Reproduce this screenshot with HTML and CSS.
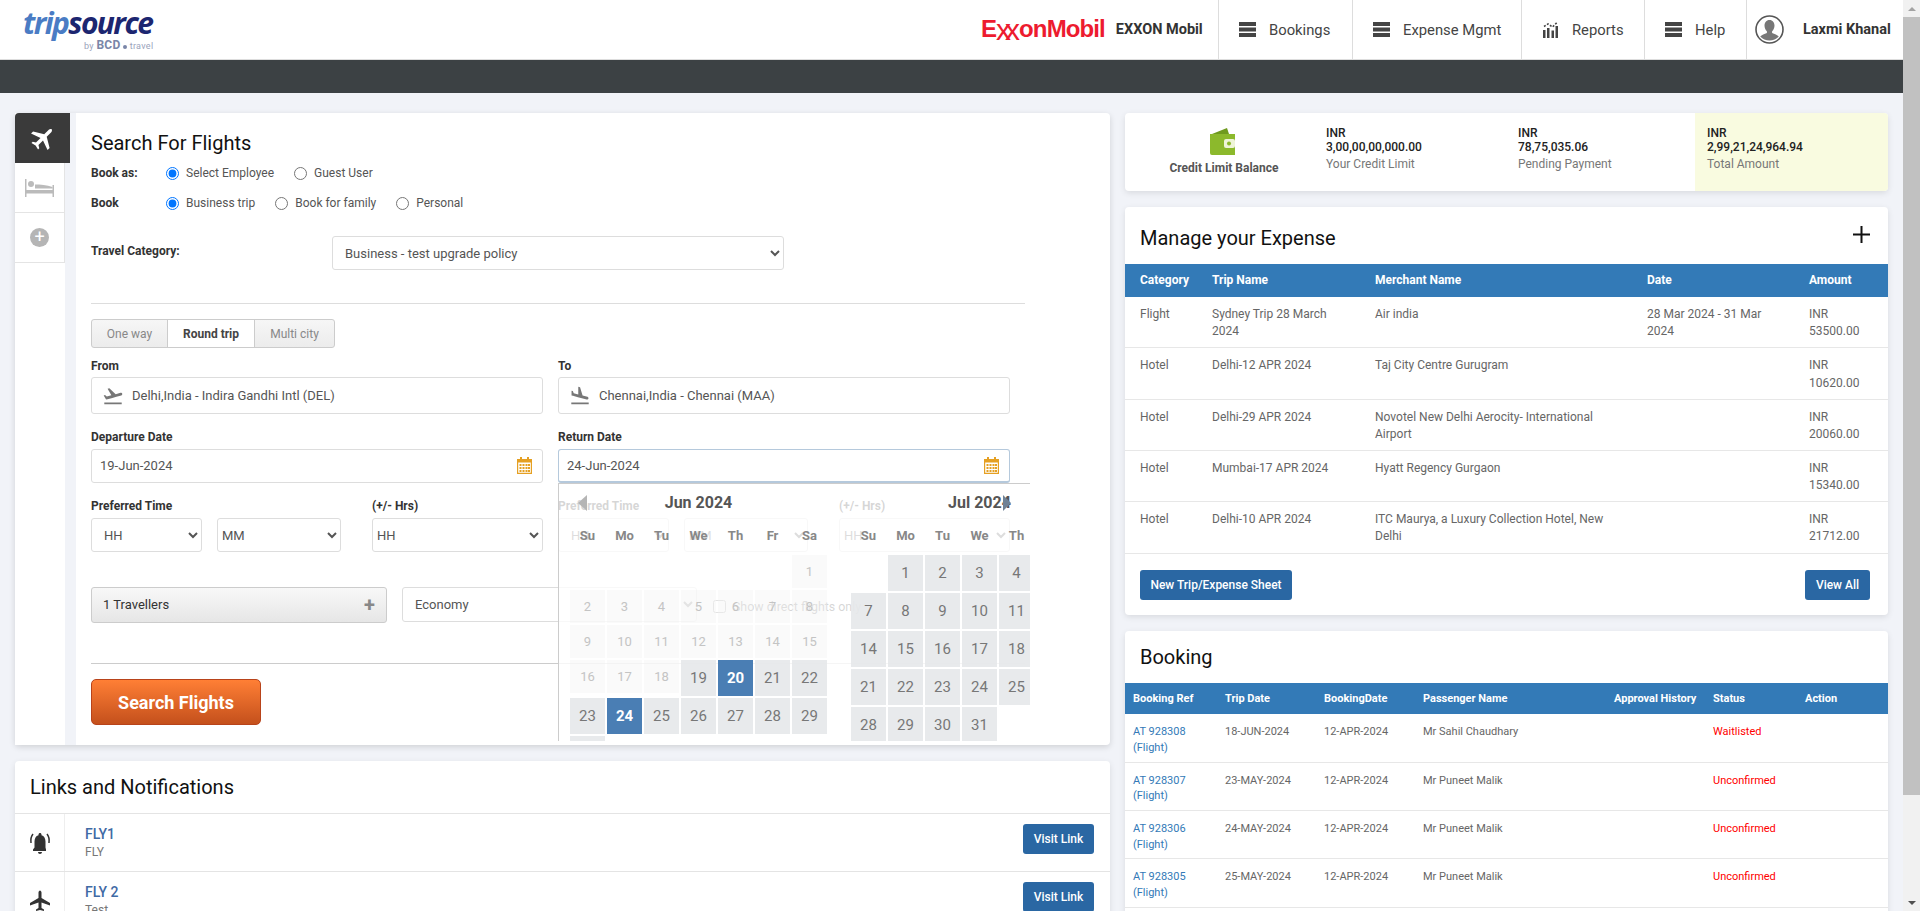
FILE: index.html
```html
<!DOCTYPE html>
<html lang="en">
<head>
    <meta charset="UTF-8">
    <meta name="viewport" content="width=device-width, initial-scale=1.0">
    <title>TripSource - Search For Flights</title>
    <link rel="stylesheet" href="styles.css">
</head>
<body>
    <svg class="icon-defs" width="0" height="0">
        <symbol id="i-menu" viewBox="0 0 17 15"><path d="M0 0h17v4H0zM0 5.500h17v4H0zM0 11h17v4H0z"/></symbol>
        <symbol id="i-plane" viewBox="0 0 24 24"><path d="M22 16.500v-2.500l-8.500-5V3.500c0-1-.8-2-1.500-2s-1.500 1-1.500 2V9L2 14v2.500l8.500-3V19L8 20.500V22l4-1 4 1v-1.500L13.500 19v-5.500z"/></symbol>
        <symbol id="i-cal" viewBox="0 0 15 17">
            <path d="M3 0h2v2h5V0h2v2h3v15H0V2h3zM1.200 5.500v10.300h12.600V5.500z"/>
            <path d="M2.500 7h2v2h-2zM5.500 7h2v2h-2zM8.500 7h2v2h-2zM11 7h2v2h-2zM2.500 10h2v2h-2zM5.500 10h2v2h-2zM8.500 10h2v2h-2zM11 10h2v2h-2zM2.500 13h2v2h-2zM5.500 13h2v2h-2zM8.500 13h2v2h-2zM11 13h2v2h-2z"/>
        </symbol>
    </svg>

    <div class="page">
        <div class="content">
            <header class="topbar">
                <div class="logo">
                    <div class="logo-word"><span class="logo-trip">trip</span><span class="logo-source">source</span></div>
                    <div class="logo-by">by <b>BCD</b> <i class="logo-dot"></i> travel</div>
                </div>
                <div class="topnav">
                    <div class="brand">
                        <span class="brand-logo">E<span class="brand-xx">xx</span>onMobil</span>
                        <span class="brand-name">EXXON Mobil</span>
                    </div>
                    <a class="nav-item nav-bookings"><svg class="nav-icon"><use href="#i-menu"/></svg>Bookings</a>
                    <a class="nav-item nav-expense"><svg class="nav-icon"><use href="#i-menu"/></svg>Expense Mgmt</a>
                    <a class="nav-item nav-reports">
                        <svg class="nav-icon reports-icon" viewBox="0 0 17 17"><path d="M1 9h2.500v8H1zM5 7h2.500v10H5zM9.500 9.500H12V17H9.500zM13.500 5H16v12h-2.500z"/><path d="M2 5.500l4-2.500 4.500 3L15 1.500" fill="none" stroke="currentColor" stroke-width="1.600" stroke-dasharray="2 1.500"/></svg>
                        Reports
                    </a>
                    <a class="nav-item nav-help"><svg class="nav-icon"><use href="#i-menu"/></svg>Help</a>
                    <div class="nav-user">
                        <svg class="avatar" viewBox="0 0 29 29">
                            <circle cx="14.500" cy="14.500" r="13.500" fill="#fff" stroke="#555" stroke-width="1.600"/>
                            <path d="M14.500 5c3.200 0 5 2.500 5 5.600 0 2.400-1 4.500-2.400 5.700v1.700c2.500 1 5.300 1.900 6.700 3.500a13 13 0 0 1-18.600 0c1.400-1.600 4.200-2.500 6.700-3.500v-1.700c-1.400-1.200-2.400-3.300-2.400-5.700 0-3.100 1.800-5.600 5-5.600z" fill="#777"/>
                        </svg>
                        <span>Laxmi Khanal</span>
                    </div>
                </div>
            </header>
            <div class="darkbar"></div>

            <main class="layout">
                <div class="col-left">
                    <section class="search-card">
                        <nav class="side-tabs">
                            <div class="side-tab active"><svg class="side-plane"><use href="#i-plane"/></svg></div>
                            <div class="side-tab">
                                <svg class="side-bed" viewBox="0 0 29 18"><path d="M0 0h1.500v11h26V6h1.500v12h-1.500v-3.500h-26V18H0z"/><circle cx="6" cy="5" r="3"/><path d="M10 5.500c5 0 12 .5 17.500 2.500v1.500H10z"/></svg>
                            </div>
                            <div class="side-tab"><span class="side-plus">+</span></div>
                        </nav>

                        <form class="search-form">
                            <h2 class="form-title">Search For Flights</h2>
                            <div class="radio-row">
                                <span class="radio-label">Book as:</span>
                                <label class="radio"><input type="radio" name="bookas" checked>Select Employee</label>
                                <label class="radio"><input type="radio" name="bookas">Guest User</label>
                            </div>
                            <div class="radio-row">
                                <span class="radio-label">Book</span>
                                <label class="radio"><input type="radio" name="book" checked>Business trip</label>
                                <label class="radio"><input type="radio" name="book">Book for family</label>
                                <label class="radio"><input type="radio" name="book">Personal</label>
                            </div>
                            <div class="category-row">
                                <label class="category-label">Travel Category:</label>
                                <select class="field category-select"><option>Business - test upgrade policy</option></select>
                            </div>
                            <hr class="rule rule-top">

                            <div class="trip-tabs">
                                <span class="trip-tab oneway">One way</span>
                                <span class="trip-tab round selected">Round trip</span>
                                <span class="trip-tab multi">Multi city</span>
                            </div>

                            <div class="two-col">
                                <div>
                                    <label class="label">From</label>
                                    <div class="field place">
                                        <svg class="place-icon" viewBox="0 0 24 24"><path d="M2.500 19h19v2h-19zm19.570-9.360c-.21-.8-1.040-1.280-1.840-1.060L14.920 10l-6.900-6.430-1.930.51 4.140 7.170-4.970 1.330-1.970-1.540-1.450.39 1.820 3.160.77 1.330 1.600-.43 5.310-1.420 4.350-1.160L21 11.490c.81-.23 1.280-1.050 1.070-1.850z"/></svg>
                                        Delhi,India - Indira Gandhi Intl (DEL)
                                    </div>
                                </div>
                                <div>
                                    <label class="label">To</label>
                                    <div class="field place">
                                        <svg class="place-icon" viewBox="0 0 24 24"><path d="M2.500 19h19v2h-19zm7.180-5.730l4.350 1.160 5.310 1.420c.8.21 1.620-.26 1.840-1.060.21-.8-.26-1.620-1.060-1.840l-5.310-1.420-2.760-9.020L10.120 2v8.280L5.150 8.950l-.93-2.320-1.450-.39v5.170l1.600.43 5.310 1.430z"/></svg>
                                        Chennai,India - Chennai (MAA)
                                    </div>
                                </div>
                            </div>

                            <div class="two-col date-row">
                                <div>
                                    <label class="label">Departure Date</label>
                                    <div class="field date">19-Jun-2024<svg class="cal-icon"><use href="#i-cal"/></svg></div>
                                </div>
                                <div class="return-date">
                                    <label class="label">Return Date</label>
                                    <div class="field date focused">24-Jun-2024<svg class="cal-icon"><use href="#i-cal"/></svg></div>

                                    <div class="calendar">
                                        <span class="cal-prev"></span>
                                        <span class="cal-next"></span>
                                        <div class="cal-month">
                                            <div class="cal-title">Jun 2024</div>
                                            <div class="cal-days"><span>Su</span><span>Mo</span><span>Tu</span><span>We</span><span>Th</span><span>Fr</span><span>Sa</span></div>
                                            <div class="cal-grid">
                                                <span></span><span></span><span></span><span></span><span></span><span></span><span class="off">1</span>
                                                <span class="off">2</span><span class="off">3</span><span class="off">4</span><span class="off">5</span><span class="off">6</span><span class="off">7</span><span class="off">8</span>
                                                <span class="off">9</span><span class="off">10</span><span class="off">11</span><span class="off">12</span><span class="off">13</span><span class="off">14</span><span class="off">15</span>
                                                <span class="off">16</span><span class="off">17</span><span class="off">18</span><span class="day">19</span><span class="day picked">20</span><span class="day">21</span><span class="day">22</span>
                                                <span class="day">23</span><span class="day picked">24</span><span class="day">25</span><span class="day">26</span><span class="day">27</span><span class="day">28</span><span class="day">29</span>
                                                <span class="day">30</span>
                                            </div>
                                        </div>
                                        <div class="cal-month">
                                            <div class="cal-title">Jul 2024</div>
                                            <div class="cal-days"><span>Su</span><span>Mo</span><span>Tu</span><span>We</span><span>Th</span><span>Fr</span><span>Sa</span></div>
                                            <div class="cal-grid">
                                                <span></span><span class="day">1</span><span class="day">2</span><span class="day">3</span><span class="day">4</span><span class="day">5</span><span class="day">6</span>
                                                <span class="day">7</span><span class="day">8</span><span class="day">9</span><span class="day">10</span><span class="day">11</span><span class="day">12</span><span class="day">13</span>
                                                <span class="day">14</span><span class="day">15</span><span class="day">16</span><span class="day">17</span><span class="day">18</span><span class="day">19</span><span class="day">20</span>
                                                <span class="day">21</span><span class="day">22</span><span class="day">23</span><span class="day">24</span><span class="day">25</span><span class="day">26</span><span class="day">27</span>
                                                <span class="day">28</span><span class="day">29</span><span class="day">30</span><span class="day">31</span>
                                            </div>
                                        </div>
                                    </div>
                                </div>
                            </div>

                            <div class="two-col time-row">
                                <div class="time-group">
                                    <div class="time-pref">
                                        <label class="label">Preferred Time</label>
                                        <div class="time-selects">
                                            <select class="field sel-hh"><option>HH</option></select>
                                            <select class="field sel-mm"><option>MM</option></select>
                                        </div>
                                    </div>
                                    <div class="time-plus">
                                        <label class="label">(+/- Hrs)</label>
                                        <select class="field sel-plus"><option>HH</option></select>
                                    </div>
                                </div>
                                <div class="time-group">
                                    <div class="time-pref">
                                        <label class="label">Preferred Time</label>
                                        <div class="time-selects">
                                            <select class="field sel-hh"><option>HH</option></select>
                                            <select class="field sel-mm"><option>MM</option></select>
                                        </div>
                                    </div>
                                    <div class="time-plus">
                                        <label class="label">(+/- Hrs)</label>
                                        <select class="field sel-plus"><option>HH</option></select>
                                    </div>
                                </div>
                            </div>

                            <div class="traveller-row">
                                <div class="travellers">1 Travellers<span class="trav-plus">+</span></div>
                                <select class="field cabin"><option>Economy</option></select>
                                <label class="direct"><input type="checkbox">Show direct flights only</label>
                            </div>
                            <hr class="rule rule-bottom">
                            <button type="button" class="search-btn">Search Flights</button>
                        </form>
                    </section>

                    <section class="links-card">
                        <h2 class="links-title">Links and Notifications</h2>
                        <div class="link-row">
                            <div class="link-icon">
                                <svg class="bell" viewBox="0 0 24 24"><path d="M12 23c1.100 0 2-.9 2-2h-4c0 1.100.89 2 2 2zm5.500-6.500v-6c0-3.070-1.300-5.640-4-6.320V3.500c0-.83-.67-1.500-1.500-1.500s-1.500.67-1.500 1.500v.68c-2.700.68-4 3.240-4 6.320v6l-1.500 2V20h13v-1.500z"/><path d="M5 3C3.300 5 2.500 8 3 12M19 3c1.700 2 2.500 5 2 9" fill="none" stroke="currentColor" stroke-width="1.500"/></svg>
                            </div>
                            <div class="link-text"><a class="link-name">FLY1</a><span class="link-sub">FLY</span></div>
                            <a class="btn visit-btn">Visit Link</a>
                        </div>
                        <div class="link-row">
                            <div class="link-icon"><svg class="link-plane"><use href="#i-plane"/></svg></div>
                            <div class="link-text"><a class="link-name">FLY 2</a><span class="link-sub">Test</span></div>
                            <a class="btn visit-btn">Visit Link</a>
                        </div>
                    </section>
                </div>

                <div class="col-right">
                    <section class="card credit-card">
                        <div class="credit-main">
                            <svg class="wallet" viewBox="0 0 27 27">
                                <path d="M3 6L18 0l2 6z" fill="#6f9a1e"/>
                                <path d="M1 6h25v21H3a2 2 0 0 1-2-2z" fill="#8cb92c"/>
                                <rect x="15" y="11" width="11" height="9" rx="2" fill="#eef4d8"/>
                                <circle cx="20" cy="15.500" r="2" fill="#8cb92c"/>
                            </svg>
                            <span>Credit Limit Balance</span>
                        </div>
                        <div class="credit-col">
                            <b>INR</b><b>3,00,00,00,000.00</b><span>Your Credit Limit</span>
                        </div>
                        <div class="credit-col">
                            <b>INR</b><b>78,75,035.06</b><span>Pending Payment</span>
                        </div>
                        <div class="credit-col total">
                            <b>INR</b><b>2,99,21,24,964.94</b><span>Total Amount</span>
                        </div>
                    </section>

                    <section class="card expense-card">
                        <div class="expense-head">
                            <h2 class="card-title">Manage your Expense</h2>
                            <svg class="add-icon" viewBox="0 0 17 17"><path d="M7.500 0h2v7.500H17v2H9.500V17h-2V9.500H0v-2h7.500z"/></svg>
                        </div>
                        <table class="data-table expense-table">
                            <colgroup><col class="e1"><col class="e2"><col class="e3"><col class="e4"><col class="e5"></colgroup>
                            <thead>
                                <tr><th>Category</th><th>Trip Name</th><th>Merchant Name</th><th>Date</th><th>Amount</th></tr>
                            </thead>
                            <tbody>
                                <tr><td>Flight</td><td>Sydney Trip 28 March 2024</td><td>Air india</td><td>28 Mar 2024 - 31 Mar 2024</td><td>INR 53500.00</td></tr>
                                <tr><td>Hotel</td><td>Delhi-12 APR 2024</td><td>Taj City Centre Gurugram</td><td></td><td>INR 10620.00</td></tr>
                                <tr><td>Hotel</td><td>Delhi-29 APR 2024</td><td>Novotel New Delhi Aerocity- International Airport</td><td></td><td>INR 20060.00</td></tr>
                                <tr><td>Hotel</td><td>Mumbai-17 APR 2024</td><td>Hyatt Regency Gurgaon</td><td></td><td>INR 15340.00</td></tr>
                                <tr><td>Hotel</td><td>Delhi-10 APR 2024</td><td>ITC Maurya, a Luxury Collection Hotel, New Delhi</td><td></td><td>INR 21712.00</td></tr>
                            </tbody>
                        </table>
                        <div class="expense-foot">
                            <a class="btn new-btn">New Trip/Expense Sheet</a>
                            <a class="btn all-btn">View All</a>
                        </div>
                    </section>

                    <section class="card booking-card">
                        <h2 class="card-title booking-title">Booking</h2>
                        <table class="data-table booking-table">
                            <colgroup><col class="b1"><col class="b2"><col class="b3"><col class="b4"><col class="b5"><col class="b6"><col class="b7"></colgroup>
                            <thead>
                                <tr><th>Booking Ref</th><th>Trip Date</th><th>BookingDate</th><th>Passenger Name</th><th>Approval History</th><th>Status</th><th>Action</th></tr>
                            </thead>
                            <tbody>
                                <tr><td><a class="ref">AT 928308 (Flight)</a></td><td>18-JUN-2024</td><td>12-APR-2024</td><td>Mr Sahil Chaudhary</td><td></td><td class="status">Waitlisted</td><td></td></tr>
                                <tr><td><a class="ref">AT 928307 (Flight)</a></td><td>23-MAY-2024</td><td>12-APR-2024</td><td>Mr Puneet Malik</td><td></td><td class="status">Unconfirmed</td><td></td></tr>
                                <tr><td><a class="ref">AT 928306 (Flight)</a></td><td>24-MAY-2024</td><td>12-APR-2024</td><td>Mr Puneet Malik</td><td></td><td class="status">Unconfirmed</td><td></td></tr>
                                <tr><td><a class="ref">AT 928305 (Flight)</a></td><td>25-MAY-2024</td><td>12-APR-2024</td><td>Mr Puneet Malik</td><td></td><td class="status">Unconfirmed</td><td></td></tr>
                            </tbody>
                        </table>
                    </section>
                </div>
            </main>
        </div>

        <div class="scrollbar">
            <span class="sb-arrow sb-up"></span>
            <div class="sb-track"><div class="sb-thumb"></div></div>
            <span class="sb-arrow sb-down"></span>
        </div>
    </div>
</body>
</html>
```

FILE: styles.css
```css
* {
    box-sizing: border-box;
}
html, body {
    margin: 0;
    height: 100%;
    overflow: hidden;
}
body {
    font-family: Roboto, "Liberation Sans", sans-serif;
    font-size: 12px;
    color: #555;
    background: #f1f3f8;
}
.icon-defs {
    position: absolute;
}
.page {
    display: flex;
    height: 911px;
    overflow: hidden;
}
.content {
    flex: 1;
    min-width: 0;
}

/* scrollbar */
.scrollbar {
    width: 17px;
    background: #f1f1f1;
    display: flex;
    flex-direction: column;
}
.sb-arrow {
    height: 17px;
    display: flex;
    align-items: center;
    justify-content: center;
}
.sb-up::before,
.sb-down::before {
    content: "";
    border-left: 4px solid transparent;
    border-right: 4px solid transparent;
}
.sb-up::before {
    border-bottom: 4px solid #a3a3a3;
}
.sb-down::before {
    border-top: 4px solid #505050;
}
.sb-track {
    flex: 1;
}
.sb-thumb {
    height: 778px;
    background: #c1c1c1;
}

/* header */
.topbar {
    height: 60px;
    background: #fff;
    border-bottom: 1px solid #ddd;
    display: flex;
    justify-content: space-between;
}
.logo {
    padding: 8px 0 0 23px;
    width: 170px;
}
.logo-word {
    font-family: "Open Sans", sans-serif;
    font-size: 30px;
    font-weight: 700;
    font-style: italic;
    line-height: 30px;
    letter-spacing: -1.600px;
}
.logo-trip {
    color: #4a7cc4;
}
.logo-source {
    color: #1c2670;
}
.logo-by {
    margin: 2px 0 0 61px;
    font-size: 9px;
    line-height: 10px;
    letter-spacing: 0.300px;
    color: #9aa3bb;
    white-space: nowrap;
}
.logo-by b {
    font-size: 12px;
    color: #7a86a8;
}
.logo-dot {
    display: inline-block;
    width: 4px;
    height: 4px;
    border-radius: 50%;
    background: #7a86a8;
}
.topnav {
    display: flex;
    align-items: stretch;
}
.brand {
    display: flex;
    align-items: center;
    gap: 11px;
    width: 237px;
    white-space: nowrap;
}
.brand-logo {
    font-family: "Liberation Sans", sans-serif;
    font-size: 24px;
    font-weight: 700;
    letter-spacing: -0.900px;
    color: #ed1b2f;
}
.brand-xx {
    font-size: 30px;
    font-weight: 400;
    letter-spacing: -6px;
    vertical-align: -3px;
    line-height: 1;
    margin-right: 5px;
}
.brand-name {
    font-size: 14.500px;
    font-weight: 700;
    color: #333;
}
.nav-item {
    flex: none;
    display: flex;
    align-items: center;
    gap: 13px;
    padding-left: 20px;
    border-left: 1px solid #ddd;
    font-size: 14.800px;
    color: #444;
    white-space: nowrap;
}
.nav-bookings {
    width: 134px;
}
.nav-expense {
    width: 169px;
}
.nav-reports {
    width: 123px;
}
.nav-help {
    width: 102px;
}
.nav-icon {
    width: 17px;
    height: 15px;
    fill: #444;
    color: #444;
    flex: none;
}
.reports-icon {
    height: 17px;
}
.nav-user {
    display: flex;
    align-items: center;
    gap: 19px;
    padding-left: 8px;
    border-left: 1px solid #ddd;
    font-size: 14.500px;
    font-weight: 700;
    color: #333;
    width: 157px;
    white-space: nowrap;
}
.avatar {
    width: 29px;
    height: 29px;
    flex: none;
}
.darkbar {
    height: 33px;
    background: #3c4144;
}

/* page columns */
.layout {
    display: grid;
    grid-template-columns: 1095px 763px;
    gap: 15px;
    padding: 20px 15px 0;
    align-items: start;
}
.card,
.links-card {
    background: #fff;
    border-radius: 4px;
    box-shadow: 0 2px 6px rgba(0, 0, 0, 0.1);
}

/* search card */
.search-card {
    display: flex;
    height: 632px;
    background: #fff;
    border-radius: 4px;
    box-shadow: 0 2px 6px rgba(0, 0, 0, 0.14);
    margin-bottom: 16px;
}
.side-tabs {
    width: 61px;
    flex: none;
    background: linear-gradient(to right, #fff 50px, #f1f3f8 50px);
}
.side-tab {
    width: 50px;
    height: 50px;
    border-right: 1px solid #e4e4e4;
    border-bottom: 1px solid #e4e4e4;
    display: flex;
    align-items: center;
    justify-content: center;
}
.side-tab.active {
    width: 55px;
    background: #3a3a3a;
    border: none;
    border-radius: 4px 0 0 0;
}
.side-plane {
    width: 28px;
    height: 28px;
    fill: #fff;
    transform: rotate(45deg);
}
.side-bed {
    width: 29px;
    height: 18px;
    fill: #bbb;
}
.side-plus {
    width: 19px;
    height: 19px;
    border-radius: 50%;
    background: #b5b5b5;
    color: #fff;
    font-size: 18px;
    line-height: 18px;
    text-align: center;
}
.search-form {
    flex: 1;
    margin: 0;
    padding: 15px 85px 20px 15px;
    min-width: 0;
}
.form-title {
    margin: 0;
    font-size: 20px;
    font-weight: 400;
    line-height: 30px;
    color: #111;
}
.radio-row {
    display: flex;
    align-items: center;
    height: 30px;
}
.radio-label {
    width: 75px;
    font-weight: 700;
    color: #333;
}
.radio {
    display: flex;
    align-items: center;
    gap: 7px;
    margin-right: 20px;
    color: #555;
}
.radio input {
    margin: 0;
    width: 13px;
    height: 13px;
}
.category-row {
    display: flex;
    margin-top: 18px;
}
.category-label {
    width: 241px;
    padding-top: 8px;
    font-weight: 700;
    color: #333;
}
.field {
    background: #fff;
    border: 1px solid #ddd;
    border-radius: 3px;
    font-family: inherit;
    font-size: 13px;
    color: #555;
}
.category-select {
    width: 452px;
    height: 34px;
    padding: 0 8px;
}
.rule {
    border: none;
    border-top: 1px solid #ddd;
    margin: 0;
}
.rule-top {
    margin: 33px 0 15px;
}
.rule-bottom {
    margin: 40px 0 15px;
    border-top-color: #ccc;
}
.trip-tabs {
    display: inline-flex;
    height: 29px;
    border: 1px solid #ccc;
    border-radius: 3px;
    vertical-align: top;
    background: linear-gradient(#f6f6f6, #ececec);
}
.trip-tab {
    display: flex;
    align-items: center;
    justify-content: center;
    color: #888;
}
.oneway {
    width: 75px;
}
.round {
    width: 88px;
}
.multi {
    width: 79px;
}
.trip-tab.selected {
    background: #fff;
    font-weight: 700;
    color: #444;
    border-left: 1px solid #ccc;
    border-right: 1px solid #ccc;
}
.two-col {
    display: grid;
    grid-template-columns: 452px 452px;
    gap: 15px;
    margin-top: 9px;
}
.label {
    display: block;
    height: 18px;
    line-height: 18px;
    font-weight: 700;
    color: #333;
    margin-bottom: 2px;
}
.place {
    height: 37px;
    display: flex;
    align-items: center;
    padding-left: 10px;
}
.place-icon {
    width: 22px;
    height: 22px;
    fill: #777;
    margin-right: 8px;
    flex: none;
}
.date-row {
    margin-top: 14px;
}
.date-row .label,
.time-row .label {
    margin-bottom: 3px;
}
.date {
    position: relative;
    height: 34px;
    line-height: 32px;
    padding-left: 8px;
}
.date.focused {
    border-color: #b5c9dc;
    border-bottom-width: 2px;
}
.cal-icon {
    position: absolute;
    right: 10px;
    top: 7px;
    width: 15px;
    height: 17px;
    fill: #e5a023;
}
.time-row {
    margin-top: 14px;
}
.time-group {
    display: flex;
    justify-content: space-between;
}
.time-selects {
    display: flex;
    gap: 15px;
}
.time-row select {
    height: 34px;
}
.sel-hh {
    width: 111px;
    padding-left: 8px;
}
.sel-mm {
    width: 124px;
    padding-left: 0;
}
.sel-plus {
    width: 171px;
    padding-left: 0;
}

.traveller-row {
    display: flex;
    align-items: flex-start;
    margin-top: 35px;
    height: 36px;
}
.travellers {
    width: 296px;
    height: 36px;
    line-height: 34px;
    padding: 0 11px;
    border: 1px solid #ccc;
    border-radius: 3px;
    background: linear-gradient(#f8f8f8, #e6e6e6);
    color: #333;
    font-size: 13px;
    display: flex;
    justify-content: space-between;
}
.trav-plus {
    font-size: 20px;
    font-weight: 700;
    color: #888;
}
.cabin {
    width: 295px;
    height: 35px;
    margin-left: 15px;
    padding-left: 8px;
}
.direct {
    display: flex;
    align-items: center;
    gap: 7px;
    height: 38px;
    margin-left: 16px;
    font-size: 12.400px;
    color: #333;
    white-space: nowrap;
}
.direct input {
    margin: 0;
    width: 13px;
    height: 13px;
}
.search-btn {
    display: block;
    width: 170px;
    height: 46px;
    border: 1px solid #b8431a;
    border-radius: 5px;
    background: linear-gradient(#ff7f35, #c4501c);
    color: #fff;
    font-family: inherit;
    font-size: 18px;
    font-weight: 700;
}

/* date picker */
.return-date {
    position: relative;
}
.calendar {
    position: absolute;
    left: 0;
    top: 100%;
    width: 472px;
    height: 258px;
    z-index: 5;
    display: flex;
    gap: 24px;
    padding-left: 11px;
    overflow: hidden;
    background: rgba(255, 255, 255, 0.8);
    border-left: 1px solid #ccc;
    border-top: 1px solid #ccc;
}
.cal-prev,
.cal-next {
    position: absolute;
    top: 11px;
    border-top: 8px solid transparent;
    border-bottom: 8px solid transparent;
}
.cal-prev {
    left: 19px;
    border-right: 9px solid #b5b5b5;
}
.cal-next {
    left: 444px;
    border-left: 8px solid #6f8296;
}
.cal-month {
    flex: none;
    width: 257px;
}
.cal-title {
    height: 38px;
    line-height: 38px;
    text-align: center;
    font-size: 16px;
    font-weight: 700;
    color: #555;
}
.cal-days {
    display: grid;
    grid-template-columns: repeat(7, 35px);
    gap: 2px;
    height: 28px;
    margin-bottom: 5px;
    line-height: 28px;
    text-align: center;
    font-size: 13px;
    font-weight: 700;
    color: #888;
}
.cal-grid {
    display: grid;
    grid-template-columns: repeat(7, 35px);
    gap: 2px;
}
.cal-grid span {
    text-align: center;
}
.off {
    height: 33px;
    line-height: 33px;
    font-size: 13px;
    background: rgba(240, 240, 240, 0.35);
    color: #c4c4c4;
}
.day {
    height: 36px;
    line-height: 36px;
    font-size: 15px;
    background: rgba(230, 232, 234, 0.9);
    color: #777;
}
.picked {
    background: #4a7eb4;
    color: #fff;
    font-weight: 700;
}

/* links */
.links-card {
    height: 400px;
}
.links-title {
    margin: 0;
    padding: 11px 15px 0;
    height: 53px;
    font-size: 20px;
    font-weight: 400;
    line-height: 30px;
    color: #111;
    border-bottom: 1px solid #e4e4e4;
}
.link-row {
    display: flex;
    height: 58px;
    border-bottom: 1px solid #e4e4e4;
}
.link-icon {
    width: 50px;
    flex: none;
    border-right: 1px solid #eee;
    display: flex;
    align-items: center;
    justify-content: center;
    color: #333;
}
.bell,
.link-plane {
    width: 24px;
    height: 24px;
    fill: #333;
}
.link-text {
    flex: 1;
    padding: 10px 0 0 20px;
    display: flex;
    flex-direction: column;
}
.link-name {
    font-size: 14px;
    line-height: 20px;
    font-weight: 500;
    color: #3f6aa5;
}
.link-sub {
    line-height: 16px;
    color: #777;
}
.btn {
    display: inline-block;
    border-radius: 3px;
    background: #2a67a3;
    color: #fff;
    font-weight: 500;
    text-align: center;
}
.visit-btn {
    width: 71px;
    height: 30px;
    line-height: 30px;
    margin: 10px 16px 0 0;
}

/* right column */
.col-right {
    display: flex;
    flex-direction: column;
    gap: 16px;
}
.credit-card {
    display: grid;
    grid-template-columns: 198px 192px 180px 1fr;
    height: 78px;
    overflow: hidden;
}
.credit-main {
    display: flex;
    flex-direction: column;
    align-items: center;
    padding-top: 15px;
    font-weight: 700;
    color: #555;
}
.wallet {
    width: 27px;
    height: 27px;
    margin: 0 3px 6px 0;
}
.credit-col {
    display: flex;
    flex-direction: column;
    padding-top: 13px;
    line-height: 14px;
    color: #777;
}
.credit-col:nth-child(2) {
    padding-left: 3px;
}
.credit-col:nth-child(3) {
    padding-left: 3px;
}
.credit-col b {
    font-weight: 500;
    color: #222;
}
.credit-col span {
    margin-top: 3px;
}
.credit-col.total {
    background: #f9fbe0;
    padding-left: 12px;
}
.expense-head {
    height: 57px;
    padding: 16px 18px 0 15px;
    display: flex;
    justify-content: space-between;
}
.card-title {
    margin: 0;
    font-size: 20px;
    font-weight: 400;
    line-height: 30px;
    color: #111;
}
.add-icon {
    width: 17px;
    height: 17px;
    margin-top: 3px;
    fill: #111;
}
.data-table {
    width: 100%;
    table-layout: fixed;
    border-collapse: collapse;
    line-height: 1.42857;
}
.data-table th {
    background: #337ab7;
    color: #fff;
    font-weight: 700;
    text-align: left;
    padding: 8px 0;
}
.data-table td {
    padding: 9px 25px 7px 0;
    vertical-align: top;
    color: #666;
    border-bottom: 1px solid #e7e7e7;
}
.expense-table th:first-child,
.expense-table td:first-child {
    padding-left: 15px;
}
.expense-table td:last-child {
    padding-right: 15px;
}
.e1 {
    width: 87px;
}
.e2 {
    width: 163px;
}
.e3 {
    width: 272px;
}
.e4 {
    width: 162px;
}
.e5 {
    width: 79px;
}
.expense-foot {
    display: flex;
    justify-content: space-between;
    padding: 16px 18px 15px 15px;
}
.new-btn {
    width: 152px;
    height: 30px;
    line-height: 30px;
}
.all-btn {
    width: 65px;
    height: 30px;
    line-height: 30px;
}
.booking-card {
    padding-bottom: 60px;
}
.booking-title {
    height: 52px;
    padding: 11px 15px 0;
}
.booking-table {
    font-size: 11px;
}
.booking-table td {
    padding: 10px 8px 6px 0;
}
.booking-table td:first-child,
.booking-table th:first-child {
    padding-left: 8px;
}
.booking-table td:first-child {
    padding-right: 15px;
}
.b1 {
    width: 100px;
}
.b2,
.b3 {
    width: 99px;
}
.b4 {
    width: 191px;
}
.b5 {
    width: 99px;
}
.b6 {
    width: 92px;
}
.b7 {
    width: 83px;
}
.ref {
    color: #337ab7;
}
.booking-table .status {
    color: #f00;
}
```
